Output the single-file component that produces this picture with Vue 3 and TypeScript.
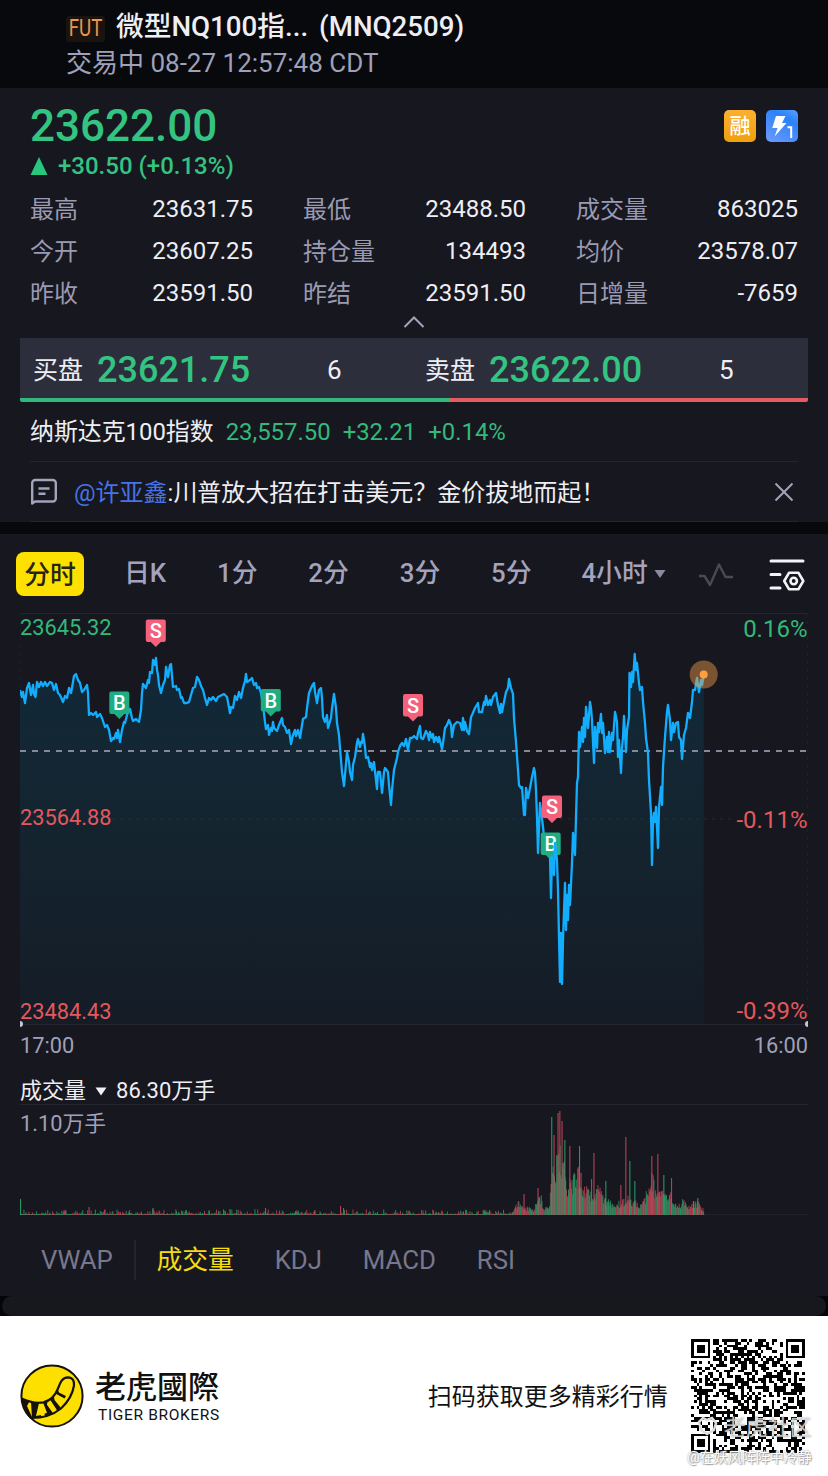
<template>
  <div class="page">
    <header class="header">
      <div class="title-row">
        <span class="fut"><b>FUT</b></span>
        <span class="title">微型NQ100指...</span>
        <span class="code">(MNQ2509)</span>
      </div>
      <div class="status">交易中 08-27 12:57:48 CDT</div>
    </header>

    <section class="quote">
      <div class="price-row">
        <div class="price">23622.00</div>
        <div class="badges">
          <span class="badge margin">融</span>
          <span class="badge level">
            <svg width="32" height="32" viewBox="0 0 32 32">
              <path d="M10 6h9.500l-3.500 7h4.500L8.600 26.500l3-8.500H6.300z" fill="#fff" />
              <path d="M21.500 17.200h3.700v10.800" fill="none" stroke="#fff" stroke-width="2" />
            </svg>
          </span>
        </div>
      </div>
      <div class="change">
        <svg width="18" height="18" viewBox="0 0 18 18"><path d="M9 0l8.500 18H.5z" fill="#26c87d" /></svg>
        <span>+30.50 (+0.13%)</span>
      </div>

      <div class="stats">
        <div v-for="s in stats" :key="s.label" class="stat">
          <span class="label">{{ s.label }}</span>
          <span>{{ s.value }}</span>
        </div>
      </div>
      <div class="collapse">
        <svg width="24" height="14" viewBox="0 0 24 14"><path d="M2.500 12L12 2.500 21.500 12" fill="none" stroke="#a3a3ba" stroke-width="2" /></svg>
      </div>

      <div class="depth">
        <div v-for="d in depth" :key="d.label" class="side">
          <span class="side-label">{{ d.label }}</span>
          <span class="side-price">{{ d.price }}</span>
          <span class="side-size">{{ d.size }}</span>
        </div>
      </div>
      <div class="ratio">
        <div class="buy" :style="{ width: buyRatio + '%' }"></div>
        <div class="sell"></div>
      </div>

      <div class="index-row">
        <span>纳斯达克100指数</span>
        <span class="up">23,557.50</span>
        <span class="up">+32.21</span>
        <span class="up">+0.14%</span>
      </div>

      <div class="news">
        <svg class="news-icon" width="28" height="28" viewBox="0 0 28 28" fill="none" stroke="#a3a3ba" stroke-width="2.400">
          <path d="M2.200 25.500V5a3 3 0 0 1 3-3h17.600a3 3 0 0 1 3 3v15.500a3 3 0 0 1-3 3H5z" stroke-linejoin="round" />
          <path d="M8.500 10.500h11M8.500 15.800h7" />
        </svg>
        <span class="news-text"><em>@许亚鑫</em>:川普放大招在打击美元？金价拔地而起！</span>
        <svg class="close" width="20" height="20" viewBox="0 0 20 20"><path d="M1.500 1.500l17 17M18.500 1.500l-17 17" stroke="#a3a3ba" stroke-width="2" /></svg>
      </div>
    </section>

    <section class="chart-panel">
      <nav class="tabs">
        <span v-for="(t, i) in periods" :key="t" class="tab" :class="{ active: i === 0 }">{{ t }}</span>
        <svg class="caret" width="12" height="10" viewBox="0 0 12 10"><path d="M.5 1h11L6 9z" fill="#8a8aa0" /></svg>
        <svg class="wave" width="36" height="26" viewBox="0 0 36 26"><path d="M1 14h5.500l5.500 9L21 2.500 27.500 15H35" fill="none" stroke="#494a56" stroke-width="2.400" stroke-linejoin="round" /></svg>
        <svg class="settings" width="36" height="34" viewBox="0 0 36 34" fill="none" stroke="#f4f4f8" stroke-width="3">
          <path d="M2 3h32M2 16.500h9M2 30h9" stroke-linecap="round" />
          <path d="M20 14.800h9.500l4.800 8.200-4.800 8.200H20L15.200 23z" stroke-width="2.600" stroke-linejoin="round" />
          <circle cx="24.700" cy="23" r="3.200" stroke-width="2.600" />
        </svg>
      </nav>

      <svg class="price-chart" width="788" height="418" viewBox="20 612 788 418">
        <defs>
          <linearGradient id="area" x1="0" y1="650" x2="0" y2="1024" gradientUnits="userSpaceOnUse">
            <stop offset="0" stop-color="#122938" />
            <stop offset="0.500" stop-color="#14242f" />
            <stop offset="1" stop-color="#151c26" />
          </linearGradient>
        </defs>
        <path d="M20 613.500H808M20 1024.500H808" stroke="#24252e" />
        <path d="M20.500 613V1024M807.500 613V1024" stroke="#1e1f28" stroke-dasharray="3 5" />
        <polygon :points="areaPoints" fill="url(#area)" />
        <path d="M112 819H735" stroke="#20303a" stroke-dasharray="3 5" />
        <path d="M20 751H808" stroke="#85899a" stroke-width="2" stroke-dasharray="6 6" />
        <polyline :points="earlyLine" class="line" />
        <g v-for="m in markers" :key="m.x" :transform="`translate(${m.x} ${m.y})`">
          <path d="M-8 0H8a2 2 0 0 1 2 2V20.500a2 2 0 0 1-2 2H5L0 27.500-5 22.500H-8a2 2 0 0 1-2-2V2a2 2 0 0 1 2-2z" :fill="m.type === 'B' ? '#1fae81' : '#f5607b'" />
          <text x="0" y="18.500" text-anchor="middle" class="marker">{{ m.type }}</text>
        </g>
        <polyline :points="lateLine" class="line" />
        <circle cx="703.700" cy="674.500" r="14" fill="#f5a04a" fill-opacity="0.450" />
        <circle cx="703.700" cy="674.500" r="4" fill="#ffa040" />
        <circle cx="20" cy="1024" r="3" fill="#c4c4d4" />
        <circle cx="808" cy="1024" r="3" fill="#c4c4d4" />
        <g class="axis-left">
          <text x="20" y="635" class="up">23645.32</text>
          <text x="20" y="825" class="down">23564.88</text>
          <text x="20" y="1019" class="down">23484.43</text>
        </g>
        <g class="axis-right">
          <text x="807.500" y="637" class="up">0.16%</text>
          <text x="807.500" y="828" class="down">-0.11%</text>
          <text x="807.500" y="1019" class="down">-0.39%</text>
        </g>
      </svg>
      <div class="times"><span>17:00</span><span>16:00</span></div>

      <div class="volume-title">
        <span>成交量</span>
        <svg width="12" height="9" viewBox="0 0 12 9"><path d="M.5.500h11L6 8.500z" fill="#f0f0f4" /></svg>
        <span>86.30万手</span>
      </div>
      <div class="volume">
        <span class="volume-max">1.10万手</span>
        <svg class="volume-chart" width="788" height="111" viewBox="20 1104 788 111">
          <path d="M20 1213.500H808" stroke="#20212a" />
          <rect v-for="(b, i) in bars" :key="i" :x="b.x" :y="1214 - b.h" :width="b.w" :height="b.h" :fill="b.up ? '#2aa36c' : '#c4485a'" :fill-opacity="b.a" />
        </svg>
      </div>

      <div class="indicators">
        <span>VWAP</span>
        <i></i>
        <span class="on">成交量</span>
        <span>KDJ</span>
        <span>MACD</span>
        <span>RSI</span>
      </div>
    </section>

    <div class="sheet-edge"><div></div></div>

    <footer class="footer">
      <svg class="logo" width="64" height="64" viewBox="0 0 64 64">
        <circle cx="32" cy="32" r="30.600" fill="#fde000" stroke="#15120c" stroke-width="2" />
        <path d="M1.500 34.500C9 38 17 39.500 23.500 38.300C31 36.500 35.500 31 38 24.500C40 19 42 13.500 48 13.300C52.500 13.300 54.500 17 54 21.500C52.500 31 48 38 41 44.500C33 51 23 54 11.500 54" fill="none" stroke="#15120c" stroke-width="2.200" />
        <path d="M1.500 34.500l8 2.800L7 42l5.500 12-1.500 1C5 50 2 43 1.500 34.500zM11 38l8 1-3 13 5-1 .3 2.200-9.300 1zM23 38.500l4.500-1.200-.5 3.500 6 8.500-8 3-.5-2.500 2.500-1zM30 35.500l4-3 .5 3.500L41 44l-3.500 3zM35.500 29.500l2.500-3.500 1 2.500 7 3.500-1.500 2.500z" fill="#15120c" />
      </svg>
      <div class="brand">
        <div class="brand-cn">老虎國際</div>
        <div class="brand-en">TIGER BROKERS</div>
      </div>
      <div class="scan">扫码获取更多精彩行情</div>
      <div class="qr">
        <svg width="114" height="114" viewBox="0 0 41 41" shape-rendering="crispEdges"><path :d="qrPath" fill="#000" /></svg>
        <div class="wm-brand">
          <svg width="24" height="22" viewBox="0 0 24 22"><path d="M3 8l4-4 4 2 5-2 4 5-2 7-7 4-6-4z" fill="none" stroke="#ddd" stroke-width="2.500" /></svg>
          老虎社区
        </div>
        <div class="wm-user">@在妖风阵阵中冷静</div>
      </div>
    </footer>
  </div>
</template>

<script setup lang="ts">
interface Bar { x: number; h: number; w: number; up: boolean; a: number }

const stats = [
  { label: '最高', value: '23631.75' },
  { label: '最低', value: '23488.50' },
  { label: '成交量', value: '863025' },
  { label: '今开', value: '23607.25' },
  { label: '持仓量', value: '134493' },
  { label: '均价', value: '23578.07' },
  { label: '昨收', value: '23591.50' },
  { label: '昨结', value: '23591.50' },
  { label: '日增量', value: '-7659' }
]

const depth = [
  { label: '买盘', price: '23621.75', size: 6 },
  { label: '卖盘', price: '23622.00', size: 5 }
]
const buyRatio = 54.6 // 6 / (6 + 5)

const periods = ['分时', '日K', '1分', '2分', '3分', '5分', '4小时']

// --- 分时线 ---
const early = `20,690 22,697 23,692 25,703 27,688 29,683 31,695 33,685 34,694 35.5,697 37,682 39,687 41,682 43,686 45,682 47,686
50,682 52,683 54,690 56,684 58,693 60,695 63,702 65,696 67,698 69,688 71,693 73,682 74,676 76,674 78,680 80,683 82,692 84,690
87,685 88,693 89,715 91,713 93,715 96,712 97,717 100,714 102,718 105,727 107,725 109,730 111,741 113,738 114,739 116,733
117,738 118,730 120,742 122,730 124,722 125,723 127,715 130,709 132,718 133,721 136,719 139,722 141,710 142,693 143,684
146,688 148,680 149,683 150,672 152,673 153,660 155,665 156,658 157,670 158,675 159,685 161,693 163,685 165,680 166,667
168,677 170,665 171,664 173,687 176,686 177,690 179,689 181,698 182,697 184,703 187,703 189,702 191,695 193,688 195,687
197,677 199,680 201,686 203,690 205,698 207,705 209,698 211,700 213,697 216,701 218,697 222,695 224,694 227,697 228,702
230,713 231,707 233,708 235,696 237,700 239,692 241,698 243,688 245,681 246,674 247,682 250,680 252,678 254,685 256,683
257,688 259,687 261,693 263,705 265,722 266,729 268,725 269,735 271,728 272,731 273,722 274,728 277,731 279,725 282,718
283,725 285,727 287,733 289,730 291,744 293,735 295,730 296,736 298,730 300,738 302,725 303,719 306,717 307,708 309,693
312,686 314,683 315,692 317,703 319,690 321,688 322,698 323,717 325,722 327,715 328,728 331,718 332,708 334,694 336,708
337,723 339,735 340,748 342,772 344,786 345,775 347,752 349,762 350,772 352,780 353,765 355,757 357,743 358,739 360,747
361,742 362,743 363,734 365,747 366,758 368,757 370,767 371,763 372,770 374,762 377,789 378,772 380,772 382,793 384,772
385,768 388,772 389,785 391,805 392,790 394,770 397,758 398,752 400,746 402,743 404,746 406,739 407,745 408,750 410,738
412,738 414,736 417,739 418,733 420,726 421,738 423,739 426,731 428,735 429,740 430,732 432,738 433,734 434,742 436,737
438,742 439,737 442,749 443,743 445,728 447,725 449,720 451,725 452,737 454,725 457,722 460,723 462,730 463,718 464,730
465,722 467,731 469,734 471,717 472,715 475,708 478,703 479,712 482,712 484,702 485,705 486,696 488,705 490,700 491,705
493,697 496,693 498,705 500,713 501,704 502,712 504,702 506,692 508,688 509,679 511,688 513,694 514,718 516,742 518,770
519,785 521,788 522,787 524,815 525,815 526,788 528,798 530,788 532,777 534,768 535,773 536,790 537,817 538,853 540,803
541,810 543,827 545,846 548,838 550,857`
const late = `550,857 551,898 552,857 554,875 555,843 557,860 558,890 559,937 560,982 561,933 562,984 563,940 565,883 566,930
567,895 568,920 569,885 570,905 572,863 573,833 575,855 576,817 577,783 578,777 579,732 580,747 582,727 583,742 584,718
585,737 586,707 588,728 590,702 591,708 592,720 594,763 595,727 597,748 598,723 599,732 601,714 602,733 603,723 605,753
607,737 608,752 609,732 610,752 612,733 613,740 615,712 617,722 618,757 619,740 621,773 622,748 623,737 624,716 626,752
627,730 629,717 629.5,673 631,687 632,672 633,682 634.7,654 636,670 637,663 639,683 640,690 642,687 643,702 645,723 646,738
648,753 649,780 651,813 652,865 653,820 654,813 655,822 656,807 658,848 659,807 661,787 662,805 663,767 665,737 667,712
668,705 670,720 671,740 673,723 674,732 676,723 678,722 679,737 681,740 682,759 684,735 686,728 688,713 690,718 692,702
693,690 695,690 697,678 699,692 701,680 702,685 703.7,675`
const earlyLine = early.replace(/\n/g, ' ')
const lateLine = late.replace(/\n/g, ' ')
const areaPoints = `20,1024 ${earlyLine} ${lateLine} 703.7,1024`

const markers = [
  { type: 'B', x: 119.3, y: 691.5 },
  { type: 'S', x: 155.8, y: 619.5 },
  { type: 'B', x: 270.8, y: 689 },
  { type: 'S', x: 413, y: 694 },
  { type: 'S', x: 552, y: 795.5 },
  { type: 'B', x: 550.7, y: 832.5 }
]

// 固定种子，保证每次绘制一致
const seeded = (seed: number) => () => {
  seed = (seed * 1664525 + 1013904223) % 4294967296
  return seed / 4294967296
}

// --- 成交量 ---
const envelope = [
  [20, 2], [512, 2], [517, 13], [522, 8], [530, 7], [534, 5], [537, 18], [541, 17], [544, 6], [549, 9], [551, 50],
  [562, 62], [566, 32], [572, 32], [577, 44], [583, 28], [592, 20], [597, 27], [603, 20], [610, 12], [620, 12],
  [628, 17], [640, 10], [645, 17], [651, 44], [656, 20], [662, 22], [668, 18], [671, 22], [676, 8], [683, 14],
  [688, 8], [697, 13], [704, 5]
]
const spikes: [number, number, boolean][] = [
  [20, 16, true], [88.5, 8, false], [152.5, 7, true], [229.5, 6, true], [265, 7, false], [340, 9, false], [343, 7, false],
  [523.5, 21, false], [537.5, 27, false], [551.2, 98, true], [553.5, 80, false], [557.5, 102, false], [559.3, 104, false],
  [561.5, 94, false], [564.3, 75, true], [569.3, 69, false], [579, 69, true], [580.5, 42, false], [591, 36, false],
  [593.4, 62, false], [605.3, 34, true], [620.3, 30, false], [625.3, 78, false], [629.3, 54, true], [634.3, 34, true],
  [651.3, 59, false], [657.3, 61, false], [663.3, 40, true], [671, 37, false], [697.3, 17, true], [693, 14, true]
]
const level = (x: number) => {
  const i = envelope.findIndex(p => p[0] > x)
  const [x0, y0] = envelope[i - 1]
  const [x1, y1] = envelope[i]
  return y0 + (y1 - y0) * (x - x0) / (x1 - x0)
}
const bars: Bar[] = []
const rand = seeded(7)
for (let x = 20; x < 703.6; x += 0.7) {
  const r = rand()
  const h = x < 512 ? 0.8 + r * r * r * r * 5 : level(x) * (0.55 + r * 0.65)
  bars.push({ x, h: Math.max(h, 1), w: 0.9, up: rand() > 0.45, a: 0.85 })
}
spikes.forEach(([x, h, up]) => bars.push({ x, h, w: 1.1, up, a: 0.9 }))

// --- 二维码 41 x 41 ---
const finder = (x: number, y: number) => {
  const d = Math.max(Math.abs(x - 3), Math.abs(y - 3))
  return d === 3 || d <= 1
}
const qrRand = seeded(2509)
let qrPath = ''
for (let y = 0; y < 41; y++) {
  for (let x = 0; x < 41; x++) {
    let on = qrRand() > 0.49
    if (x === 6 || y === 6) on = (x + y) % 2 === 0
    const d = Math.max(Math.abs(x - 34), Math.abs(y - 34))
    if (d <= 2) on = d !== 1
    if (x < 8 && y < 8) on = finder(x, y)
    if (x > 32 && y < 8) on = finder(x - 34, y)
    if (x < 8 && y > 32) on = finder(x, y - 34)
    if (on) qrPath += `M${x} ${y}h1v1h-1z`
  }
}
</script>

<style>
body {
  background: #17171f;
}
</style>

<style scoped>
.page {
  width: 828px; height: 1476px;
  display: flex; flex-direction: column;
  overflow: hidden;
  background: #17171f;
  color: #eeeef3;
  font-family: Roboto, "Noto Sans CJK SC", sans-serif;
  font-size: 24px;
  white-space: nowrap;
}
svg { display: block; flex: none; }

.header {
  box-sizing: border-box;
  height: 88px;
  padding: 8px 0 0 66px;
  background: #08090d;
}
.title-row {
  display: flex; align-items: center;
  height: 37px;
  font-size: 27.7px; line-height: 37px; font-weight: 500;
}
.fut {
  display: flex; align-items: center; justify-content: center;
  width: 39px; height: 26px;
  margin: 4px 11px 0 0;
  background: #1b130f;
  border-radius: 3px;
  color: #e9984a;
}
.fut b { font-weight: 400; font-size: 24px; transform: scaleX(0.78); }
.code { margin-left: 11px; }
.status { height: 36px; font-size: 26px; line-height: 37px; color: #a0a0b9; }

.quote { height: 434px; border-bottom: 12px solid #08090d; }
.price-row {
  display: flex; justify-content: space-between; align-items: center;
  height: 56px;
  padding: 10px 30px 0;
}
.price { font-size: 44px; font-weight: 500; color: #33c481; }
.badges { display: flex; gap: 10px; }
.badge { width: 32px; height: 32px; border-radius: 5px; }
.margin {
  background: linear-gradient(#fbb031, #f0a00c);
  font-size: 21px; line-height: 33px; font-weight: 500; text-align: center; color: #fff;
}
.level { background: linear-gradient(30deg, #6f9bff, #2c82fa 70%, #57a0ff); }
.change {
  display: flex; align-items: center; gap: 10px;
  height: 24px; padding-left: 30px;
  font-weight: 500; line-height: 24px; color: #33c481;
}
.stats {
  display: grid; grid-template-columns: 223px 223px 1fr; column-gap: 50px;
  grid-auto-rows: 42px;
  padding: 10px 30px 0;
}
.stat { display: flex; justify-content: space-between; line-height: 42px; }
.label { color: #9a9ab2; line-height: 44px; }
.collapse { display: flex; justify-content: center; height: 22px; padding-top: 1px; box-sizing: border-box; }
.depth {
  display: grid; grid-template-columns: 392px 1fr;
  height: 60px; margin: 2px 20px 0;
  background: #2d2e3c;
}
.side { display: flex; align-items: center; height: 60px; padding-left: 13px; line-height: 60px; overflow: hidden; }
.side-label { font-size: 25px; width: 64px; padding-top: 6px; }
.side-price { font-size: 36px; font-weight: 500; color: #33c481; width: 230px; padding-top: 4px; }
.side-size { font-size: 26px; padding-top: 4px; }
.ratio { display: flex; height: 4px; margin: 0 20px; border-radius: 0 0 2px 2px; overflow: hidden; }
.buy { background: #32b87c; }
.sell { flex: 1; background: #e25d62; }
.index-row { display: flex; gap: 12px; height: 59px; padding-left: 30px; line-height: 60px; font-size: 23.9px; }
.up { color: #33b97a; fill: #33b97a; }
.down { fill: #e4585e; }
.news {
  display: flex; align-items: center;
  box-sizing: border-box;
  height: 61px; margin: 0 30px;
  border-top: 1px solid #24252e; border-bottom: 1px solid #24252e;
}
.news-text { margin-left: 16px; flex: 1; padding-bottom: 2px; }
.news em { font-style: normal; color: #4673e6; }
.close { margin-right: 4px; }

.chart-panel { height: 762px; }
.tabs { display: flex; align-items: center; height: 78px; padding: 1px 0 0 16px; box-sizing: border-box; }
.tab { margin-right: 50.9px; font-size: 25.8px; font-weight: 500; line-height: 47px; color: #a3a3bd; }
.tab.active {
  width: 68px; height: 44px; margin-right: 40px;
  background: #ffe100; color: #25241a;
  border-radius: 8px; text-align: center; line-height: 46px;
}
.tab:nth-of-type(7) { margin: 0 6px 0 -1px; }
.wave { margin: 2px 0 0 32px; }
.settings { margin: 3px 0 0 35px; }
.price-chart { margin-left: 20px; }
.line { fill: none; stroke: #12adfc; stroke-width: 2.3; stroke-linejoin: round; }
.marker { fill: #fff; font-size: 20px; font-weight: 500; }
.axis-left { font-size: 21.8px; }
.axis-right { font-size: 24px; text-anchor: end; }
.times { display: flex; justify-content: space-between; padding: 0 20px; height: 48px; font-size: 21.8px; line-height: 31px; color: #a0a0b9; }
.volume-title {
  display: flex; align-items: center; gap: 9px;
  box-sizing: border-box;
  height: 27px; margin: 0 20px;
  border-bottom: 1px solid #24252e;
  font-size: 22px; line-height: 28px;
}
.volume { position: relative; height: 111px; margin-left: 20px; }
.volume-max { position: absolute; left: 0; top: 4px; font-size: 21.8px; line-height: 30px; color: #a0a0b9; }
.indicators { display: flex; align-items: center; gap: 40.8px; height: 88px; padding-left: 41px; font-size: 25.8px; line-height: 42px; color: #77778d; }
.indicators span { height: 42px; }
.indicators i { width: 2px; height: 40px; margin: 0 -20px; background: #24252e; }
.indicators .on { color: #f4dc14; }

.sheet-edge { height: 20px; background: #040509; }
.sheet-edge div { height: 20px; margin: 0 2px; border-radius: 10px; background: #17181e; }

.footer {
  display: flex; align-items: center;
  height: 160px; padding-left: 20px;
  background: #fff; color: #111;
}
.brand { margin-left: 11px; }
.brand-cn { font-family: "Noto Sans CJK TC", sans-serif; font-size: 31px; line-height: 34px; font-weight: 500; }
.brand-en { margin: 4px 0 0 3px; font-size: 15.5px; line-height: 19px; letter-spacing: 0.65px; }
.scan { margin-left: 208px; padding-bottom: 4px; }
.qr { position: relative; width: 114px; height: 114px; margin-left: 23px; }
.wm-brand {
  position: absolute; right: -7px; top: 75px;
  display: flex; gap: 4px;
  font-size: 22px; line-height: 28px;
  color: rgba(225, 225, 225, 0.8);
  text-shadow: 0 0 2px rgba(120, 120, 120, 0.7);
}
.wm-user {
  position: absolute; right: -7px; top: 109px;
  font-size: 14px; line-height: 18px;
  color: #fff;
  text-shadow: 0 0 2px #888, 1px 1px 1px #aaa;
}
</style>
